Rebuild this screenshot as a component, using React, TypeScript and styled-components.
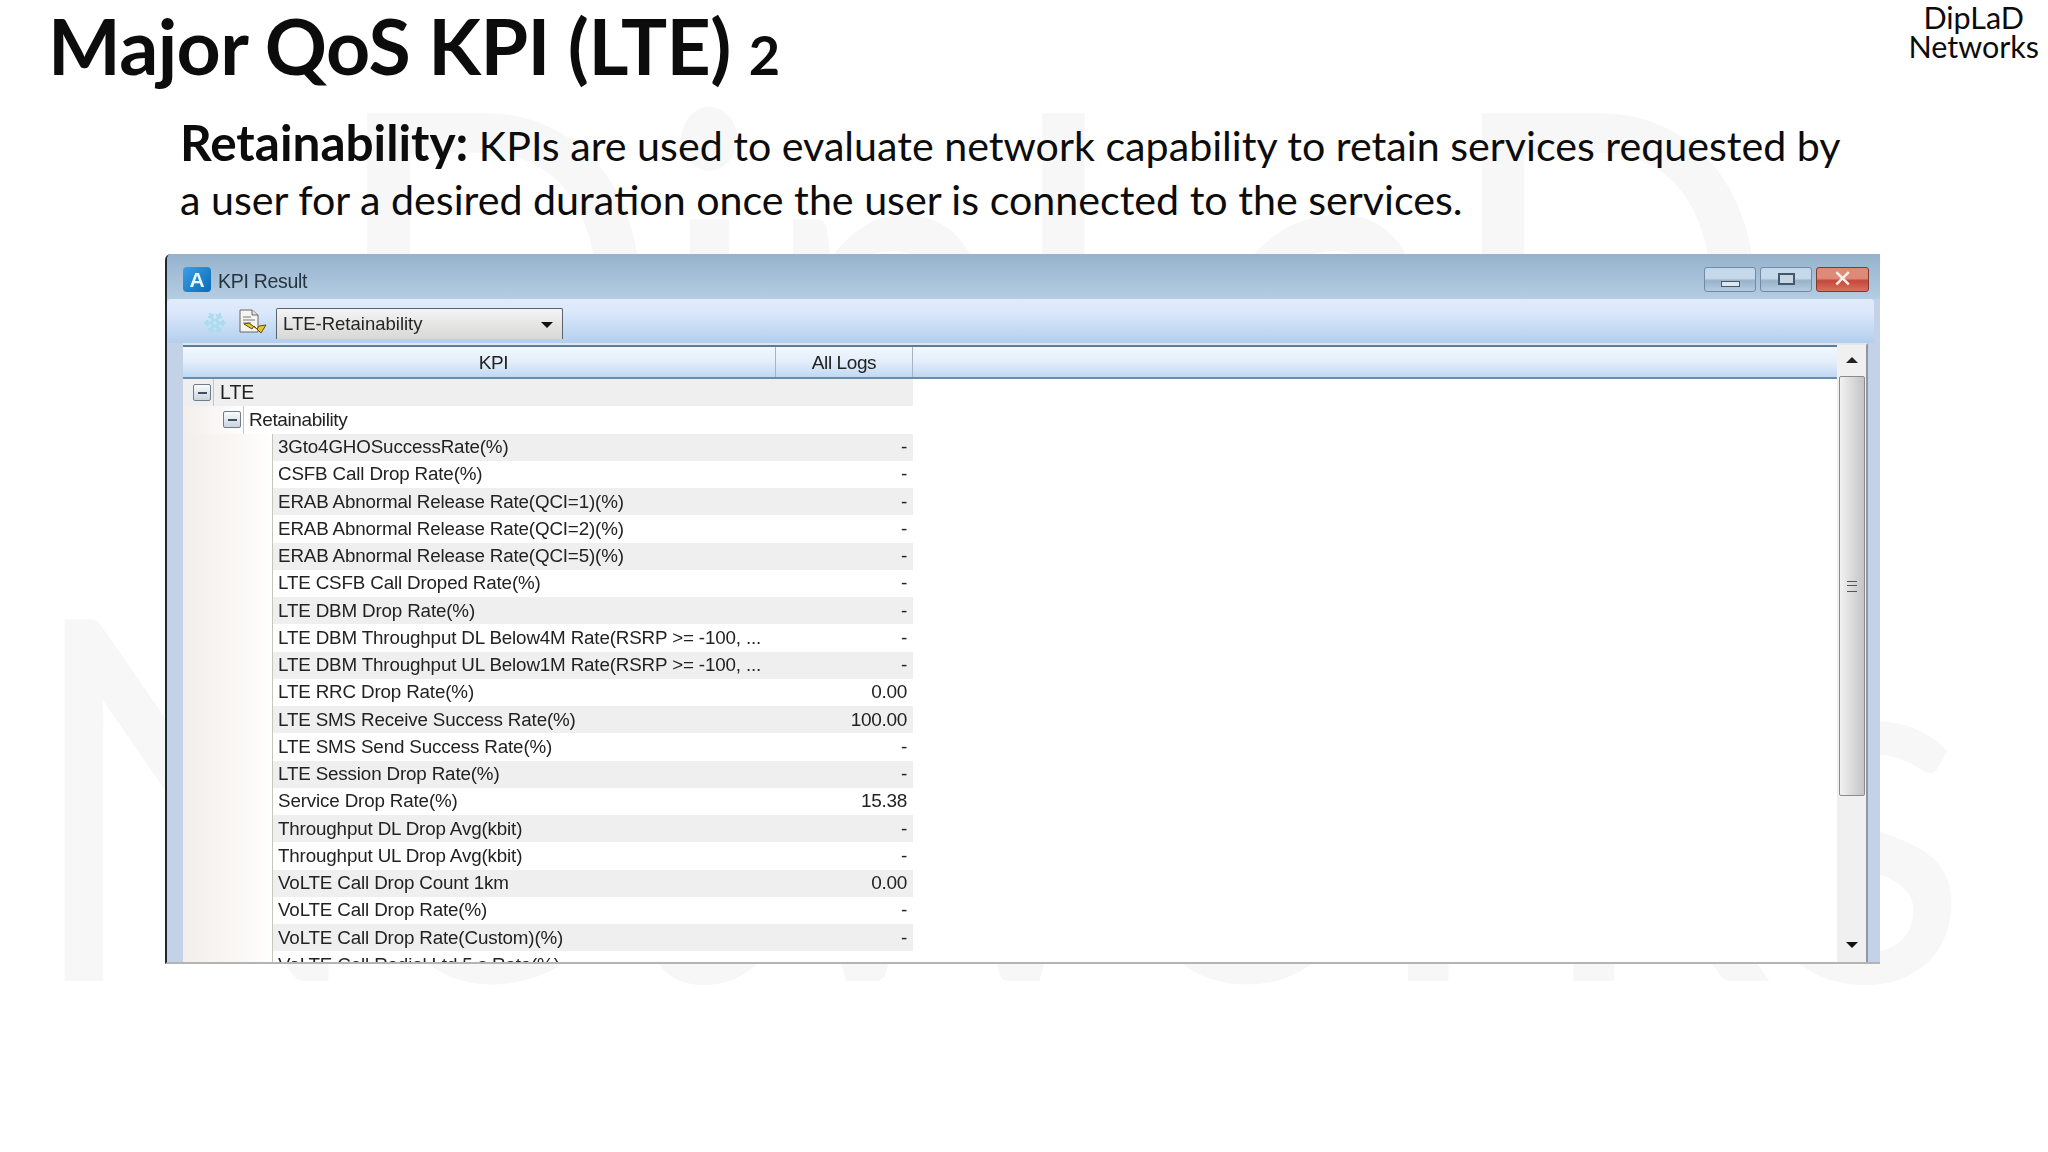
import styled, { createGlobalStyle } from "styled-components"
import { Snowflake } from "lucide-react"

const rows: { name: string; value: string }[] = [
  { name: "3Gto4GHOSuccessRate(%)", value: "-" },
  { name: "CSFB Call Drop Rate(%)", value: "-" },
  { name: "ERAB Abnormal Release Rate(QCI=1)(%)", value: "-" },
  { name: "ERAB Abnormal Release Rate(QCI=2)(%)", value: "-" },
  { name: "ERAB Abnormal Release Rate(QCI=5)(%)", value: "-" },
  { name: "LTE CSFB Call Droped Rate(%)", value: "-" },
  { name: "LTE DBM Drop Rate(%)", value: "-" },
  { name: "LTE DBM Throughput DL Below4M Rate(RSRP >= -100, ...", value: "-" },
  { name: "LTE DBM Throughput UL Below1M Rate(RSRP >= -100, ...", value: "-" },
  { name: "LTE RRC Drop Rate(%)", value: "0.00" },
  { name: "LTE SMS Receive Success Rate(%)", value: "100.00" },
  { name: "LTE SMS Send Success Rate(%)", value: "-" },
  { name: "LTE Session Drop Rate(%)", value: "-" },
  { name: "Service Drop Rate(%)", value: "15.38" },
  { name: "Throughput DL Drop Avg(kbit)", value: "-" },
  { name: "Throughput UL Drop Avg(kbit)", value: "-" },
  { name: "VoLTE Call Drop Count 1km", value: "0.00" },
  { name: "VoLTE Call Drop Rate(%)", value: "-" },
  { name: "VoLTE Call Drop Rate(Custom)(%)", value: "-" },
  { name: "VoLTE Call Redial Ltd 5 s Rate(%)", value: "" },
]

const App = () => {
  return (
    <Page>
      <GlobalStyle />
      <Watermark aria-hidden>
        <span>DipLaD</span>
        <span>Networks</span>
      </Watermark>
      <Header>
        <Title>
          Major QoS KPI (LTE) <small>2</small>
        </Title>
        <Brand>
          DipLaD
          <br />
          Networks
        </Brand>
      </Header>
      <Intro>
        <b>Retainability:</b> KPIs are used to evaluate network capability to retain services requested by
        <br />a user for a desired duration once the user is connected to the services.
      </Intro>
      <Window>
        <TitleBar>
          <AppIcon>A</AppIcon>
          <WindowName>KPI Result</WindowName>
          <Controls>
            <ControlBtn>
              <MinGlyph />
            </ControlBtn>
            <ControlBtn>
              <MaxGlyph />
            </ControlBtn>
            <CloseBtn>✕</CloseBtn>
          </Controls>
        </TitleBar>
        <Toolbar>
          <Snowflake size={24} color="#a9dcec" strokeWidth={2.4} />
          <svg width="30" height="28" viewBox="0 0 30 28">
            <path d="M3 1h12l6 5v17H3z" fill="#f5f5f2" stroke="#666" />
            <path d="M15 1v5h6" fill="#e2e2de" stroke="#666" />
            <path d="M6 8h8M6 11h12M6 14h8" stroke="#777" />
            <path d="M7 15l8 5 2-3 7 7 5-8-7 1-2 3-8-6z" fill="#e8c81e" stroke="#5f5010" />
          </svg>
          <Combo>
            LTE-Retainability
            <ComboArrow />
          </Combo>
        </Toolbar>
        <TableFrame>
          <TablePane>
            <HeadRow>
              <HeadCell $w={593} $pad={29}>
                KPI
              </HeadCell>
              <HeadCell $w={137}>All Logs</HeadCell>
            </HeadRow>
            <Body>
              <Row $shade>
                <Gutter $w={31}>
                  <Expander />
                </Gutter>
                <RootName>LTE</RootName>
              </Row>
              <Row>
                <Gutter $w={61} $tree>
                  <Expander />
                </Gutter>
                <GroupName>Retainability</GroupName>
              </Row>
              {rows.map((r, i) => (
                <Row key={r.name} $shade={i % 2 === 0}>
                  <Gutter $w={90} $tree />
                  <Name>{r.name}</Name>
                  <Value>{r.value}</Value>
                </Row>
              ))}
            </Body>
          </TablePane>
          <ScrollBar>
            <Arrow $up />
            <Thumb>
              <Grip />
            </Thumb>
            <Arrow />
          </ScrollBar>
        </TableFrame>
      </Window>
    </Page>
  )
}
export default App

const GlobalStyle = createGlobalStyle`
  html, body {
    margin: 0;
    background: #fff;
  }
`
const Page = styled.div`
  position: relative;
  width: 2048px;
  height: 1152px;
  overflow: hidden;
  background: #fff;
  font-family: Lato, "Liberation Sans", sans-serif;
  color: #0c0c0c;
`
const Watermark = styled.div`
  position: absolute;
  inset: 0;
  font-size: 505px;
  font-weight: 400;
  color: #f7f7f7;
  line-height: 1;

  span {
    position: absolute;
    white-space: nowrap;
    transform-origin: left top;
  }
  span:first-child {
    left: 327px;
    top: 28px;
    transform: scaleX(0.87);
  }
  span:last-child {
    left: 23px;
    top: 534px;
    transform: scaleX(0.9);
  }
`
const Header = styled.header`
  position: relative;
  height: 100px;
  display: flex;
  justify-content: space-between;
  padding: 0 9px 0 48px;
`
const Title = styled.h1`
  margin: 2px 0 0;
  font-size: 77px;
  line-height: 86px;
  font-weight: 700;
  letter-spacing: -0.6px;

  small {
    font-size: 54px;
  }
`
const Brand = styled.div`
  padding-top: 3px;
  font-size: 30.5px;
  line-height: 29px;
  text-align: center;
`
const Intro = styled.p`
  position: relative;
  margin: 15px 0 0 180px;
  white-space: nowrap;
  font-size: 41.2px;
  line-height: 54px;

  b {
    font-size: 49.5px;
  }
`
const Window = styled.div`
  position: relative;
  margin: 28px 0 0 165px;
  width: 1715px;
  height: 710px;
  box-sizing: border-box;
  display: flex;
  flex-direction: column;
  overflow: hidden;
  border-left: 2px solid #1c2733;
  border-top-left-radius: 6px;
  border-bottom: 2px solid #b4b4b4;
  background: #c3d2e6;
  filter: blur(0.5px);
`
const TitleBar = styled.div`
  height: 45px;
  flex: none;
  box-sizing: border-box;
  display: flex;
  align-items: center;
  padding: 6px 11px 0 16px;
  background: linear-gradient(#96b2cc, #b4cde2);
`
const AppIcon = styled.div`
  width: 28px;
  height: 25px;
  border-radius: 4px;
  background: linear-gradient(135deg, #3aa0e6, #0a6ab8);
  color: #e8f6ff;
  font: 700 21px/25px "Liberation Sans", sans-serif;
  text-align: center;
`
const WindowName = styled.div`
  margin: 4px 0 0 7px;
  font: 19.5px "Liberation Sans", sans-serif;
  letter-spacing: -0.3px;
  color: #26343f;
`
const Controls = styled.div`
  margin-left: auto;
  display: flex;
  gap: 4px;
  margin-top: -1px;
`
const ControlBtn = styled.div`
  width: 52px;
  height: 25px;
  box-sizing: border-box;
  display: flex;
  align-items: center;
  justify-content: center;
  border: 1px solid #6f8ba6;
  border-radius: 3px;
  background: linear-gradient(#c5d9ea 45%, #98b2c9 55%, #b5cce0);
`
const MinGlyph = styled.i`
  width: 17px;
  height: 4px;
  margin-top: 9px;
  background: #dfe7ee;
  border: 1px solid #44586c;
`
const MaxGlyph = styled.i`
  width: 13px;
  height: 8px;
  background: #c6d6e4;
  border: 2px solid #44586c;
`
const CloseBtn = styled.div`
  width: 53px;
  height: 25px;
  box-sizing: border-box;
  border: 1px solid #7d3a34;
  border-radius: 3px;
  background: linear-gradient(#dd8a78 45%, #c3483a 55%, #d9705f);
  color: #f8f1ea;
  font: 900 24px/23px "DejaVu Sans", sans-serif;
  text-align: center;
`
const Toolbar = styled.div`
  height: 44px;
  flex: none;
  margin-right: 6px;
  display: flex;
  align-items: center;
  padding: 4px 0 0 36px;
  box-sizing: border-box;
  background: linear-gradient(#e0ebfa, #dbe8fb 30%, #b3cfee);
  border-radius: 4px 4px 0 0;

  svg:nth-child(2) {
    margin-left: 10px;
  }
`
const Combo = styled.div`
  position: relative;
  margin-left: 9px;
  width: 287px;
  height: 31px;
  box-sizing: border-box;
  padding-left: 6px;
  border: 1px solid #59646e;
  border-bottom: 0;
  border-radius: 2px 2px 0 0;
  background: linear-gradient(#f4f4f4, #e6e6e6 50%, #d8d8d6);
  font: 18.5px/30px "Liberation Sans", sans-serif;
  color: #262626;
`
const ComboArrow = styled.i`
  position: absolute;
  right: 9px;
  top: 13px;
  border: 6px solid transparent;
  border-top-color: #111;
  border-bottom: 0;
`
const TableFrame = styled.div`
  flex: 1;
  min-height: 0;
  margin: 0 12px 0 16px;
  display: flex;
  background: #fff;
  border-top: 2px solid #dfe7ee;
  border-right: 2px solid #8d98a3;
`
const TablePane = styled.div`
  flex: 1;
  min-width: 0;
  display: flex;
  flex-direction: column;
`
const HeadRow = styled.div`
  height: 34px;
  flex: none;
  display: flex;
  box-sizing: border-box;
  border-top: 2px solid #5d7d96;
  border-bottom: 2px solid #6c8cae;
  background: linear-gradient(#f1f7fe, #e3eefb 50%, #bfd8f2);
`
const HeadCell = styled.div<{ $w: number; $pad?: number }>`
  width: ${({ $w }) => $w}px;
  box-sizing: border-box;
  padding-left: ${({ $pad }) => $pad ?? 0}px;
  border-right: 1px solid #a6b4c2;
  text-align: center;
  font: 19px/31px "Liberation Sans", sans-serif;
  letter-spacing: -0.4px;
  color: #222;
`
const Body = styled.div`
  flex: 1;
  min-height: 0;
  overflow: hidden;
  font-family: "Liberation Sans", sans-serif;
  color: #222;
`
const Row = styled.div<{ $shade?: boolean }>`
  width: 730px;
  height: 27.25px;
  display: flex;
  align-items: center;
  background: ${({ $shade }) => ($shade ? "#efefef" : "#fff")};
`
const Gutter = styled.div<{ $w: number; $tree?: boolean }>`
  flex: none;
  width: ${({ $w }) => $w}px;
  height: 100%;
  box-sizing: border-box;
  display: flex;
  align-items: center;
  justify-content: flex-end;
  padding-right: 2px;
  border-right: 1px solid #c8c4bf;
  background: ${({ $tree }) => ($tree ? "linear-gradient(90deg, #f3eeea, #fbf9f7 70%, #fff)" : "transparent")};
`
const Expander = styled.i`
  width: 18px;
  height: 17px;
  box-sizing: border-box;
  display: flex;
  align-items: center;
  justify-content: center;
  border: 1px solid #6d7d8c;
  border-radius: 2px;
  background: linear-gradient(#fafafa, #c9d5e0);

  &::before {
    content: "";
    width: 9px;
    height: 2px;
    background: #3f4f5f;
  }
`
const RootName = styled.span`
  margin-left: 6px;
  font-size: 19.5px;
`
const GroupName = styled.span`
  margin-left: 5px;
  font-size: 19px;
  letter-spacing: -0.4px;
`
const Name = styled.span`
  margin-left: 5px;
  font-size: 18.8px;
  letter-spacing: -0.15px;
  white-space: nowrap;
`
const Value = styled.span`
  margin-left: auto;
  padding-right: 6px;
  font-size: 19px;
  letter-spacing: -0.3px;
`
const ScrollBar = styled.div`
  width: 29px;
  flex: none;
  box-sizing: border-box;
  display: flex;
  flex-direction: column;
  align-items: center;
  background: #f0f0f0;
  padding: 0 1px;
  position: relative;
`
const Arrow = styled.i<{ $up?: boolean }>`
  flex: none;
  width: 0;
  height: 0;
  margin: ${({ $up }) => ($up ? "12px 0 10px" : "auto 0 14px")};
  border: 6px solid transparent;
  ${({ $up }) => ($up ? "border-bottom-color: #222; border-top: 0;" : "border-top-color: #111; border-bottom: 0;")}
`
const Thumb = styled.div`
  width: 26px;
  height: 420px;
  flex: none;
  box-sizing: border-box;
  margin-top: 3px;
  display: flex;
  align-items: center;
  justify-content: center;
  border: 1px solid #8a8a8a;
  border-radius: 2px;
  background: linear-gradient(90deg, #f2f2f2, #d8d8d8 55%, #c4c4c4);
`
const Grip = styled.i`
  width: 10px;
  height: 9px;
  border-top: 1px solid #555;
  border-bottom: 1px solid #555;
  position: relative;

  &::after {
    content: "";
    position: absolute;
    left: 0;
    right: 0;
    top: 3px;
    height: 1px;
    background: #555;
  }
`
